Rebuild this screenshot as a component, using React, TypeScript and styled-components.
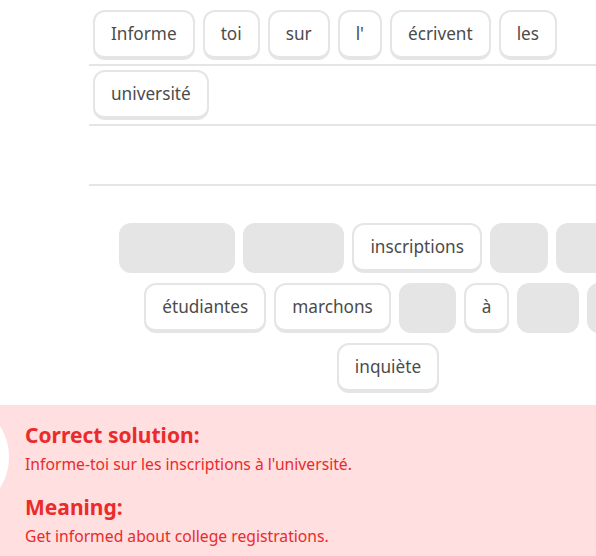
import React from "react";
import styled, { createGlobalStyle } from "styled-components";

const GlobalStyle = createGlobalStyle`
  html, body { margin: 0; padding: 0; background: #ffffff; }
  body { overflow: hidden; font-family: "Noto Sans", "DejaVu Sans", sans-serif; }
`;

const Screen = styled.div`
  width: 596px;
  height: 556px;
  overflow: hidden;
  display: flex;
  flex-direction: column;
  background: #ffffff;
`;

const Main = styled.div`
  display: flex;
  padding-left: 89px;
  overflow: hidden;
`;

const Column = styled.div`
  width: 598px;
  flex-shrink: 0;
  display: flex;
  flex-direction: column;
`;

const AnswerArea = styled.div`
  margin-top: 6px;
  min-height: 180px;
  box-sizing: border-box;
  padding: 4px 30px 0 4px;
  display: flex;
  flex-wrap: wrap;
  align-content: flex-start;
  gap: 10px 8px;
  background: repeating-linear-gradient(
    to bottom,
    transparent 0px,
    transparent 58px,
    #e5e5e5 58px,
    #e5e5e5 60px
  );
`;

const WordBank = styled.div`
  margin-top: 37px;
  display: flex;
  flex-direction: column;
  align-items: center;
  gap: 10px;
`;

const BankRow = styled.div`
  display: flex;
  justify-content: center;
  gap: 8px;
  width: 100%;
`;

const Tile = styled.div<{ $empty?: boolean }>`
  box-sizing: border-box;
  height: 50px;
  flex-shrink: 0;
  display: flex;
  align-items: center;
  justify-content: center;
  padding: 0 16px 1px;
  border: 2px solid #e5e5e5;
  border-bottom-width: 4px;
  border-radius: 12px;
  background: ${(p) => (p.$empty ? "#e5e5e5" : "#ffffff")};
  color: ${(p) => (p.$empty ? "transparent" : "#4b4b4b")};
  font-size: 17.2px;
  line-height: 22px;
  white-space: nowrap;
`;

const Banner = styled.div`
  margin-top: auto;
  height: 151px;
  background: #ffdfe0;
  display: flex;
  align-items: flex-start;
  padding-top: 16px;
  box-sizing: border-box;
  overflow: hidden;
`;

const ResultBadge = styled.div`
  width: 116px;
  height: 116px;
  border-radius: 50%;
  background: #ffffff;
  flex-shrink: 0;
  margin-left: -107px;
  margin-top: -22px;
`;

const Feedback = styled.div`
  margin-left: 16px;
  display: flex;
  flex-direction: column;
  color: #ea2b2b;
`;

const Heading = styled.div<{ $spaced?: boolean }>`
  font-size: 21px;
  line-height: 28px;
  font-weight: 700;
  margin-top: ${(p) => (p.$spaced ? "18px" : "0")};
`;

const Body = styled.div`
  font-size: 15.7px;
  line-height: 22px;
  margin-top: 4px;
`;

type Tok = { text: string; empty?: boolean };

const answer = ["Informe", "toi", "sur", "l'", "écrivent", "les", "université"];

const bank: Tok[][] = [
  [
    { text: "université", empty: true },
    { text: "Informe", empty: true },
    { text: "inscriptions" },
    { text: "les", empty: true },
    { text: "écrivent", empty: true },
  ],
  [
    { text: "étudiantes" },
    { text: "marchons" },
    { text: "toi", empty: true },
    { text: "à" },
    { text: "sur", empty: true },
    { text: "l'", empty: true },
  ],
  [{ text: "inquiète" }],
];

export default function App() {
  return (
    <Screen>
      <GlobalStyle />
      <Main>
        <Column>
          <AnswerArea>
            {answer.map((w) => (
              <Tile key={w}>{w}</Tile>
            ))}
          </AnswerArea>
          <WordBank>
            {bank.map((row, i) => (
              <BankRow key={i}>
                {row.map((t) => (
                  <Tile key={t.text} $empty={t.empty} aria-hidden={t.empty}>
                    {t.text}
                  </Tile>
                ))}
              </BankRow>
            ))}
          </WordBank>
        </Column>
      </Main>
      <Banner>
        <ResultBadge />
        <Feedback>
          <Heading>Correct solution:</Heading>
          <Body>Informe-toi sur les inscriptions à l'université.</Body>
          <Heading $spaced>Meaning:</Heading>
          <Body>Get informed about college registrations.</Body>
        </Feedback>
      </Banner>
    </Screen>
  );
}
